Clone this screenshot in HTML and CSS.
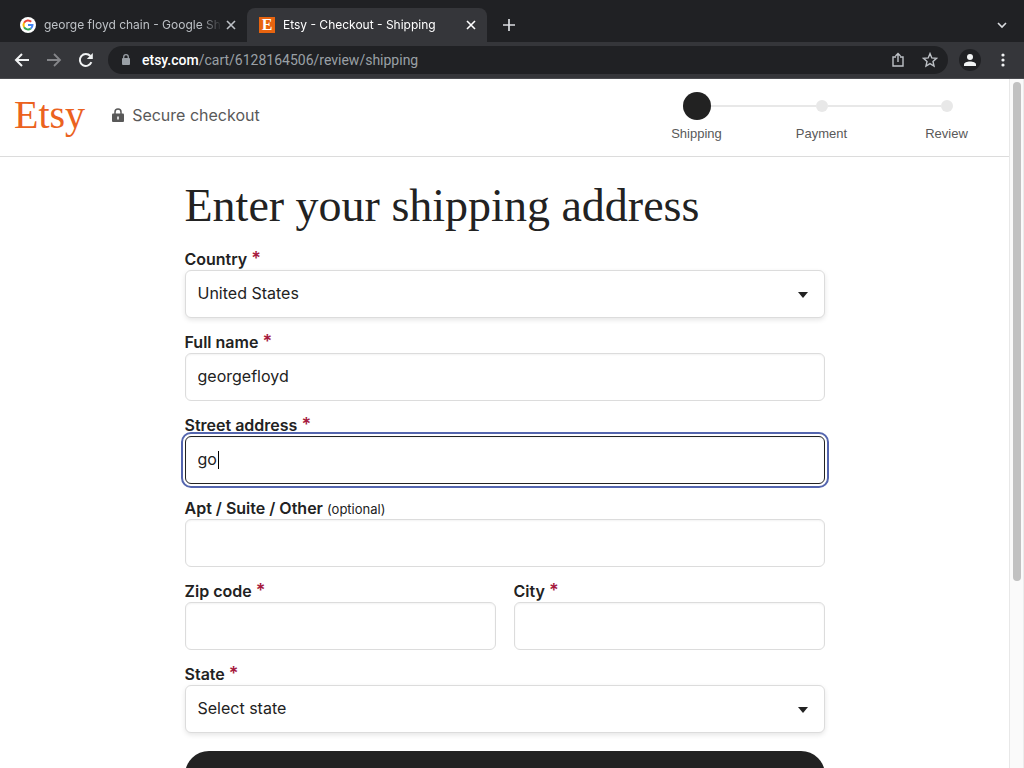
FILE: index.html
```
<!DOCTYPE html>
<html lang="en">
<head>
    <meta charset="UTF-8">
    <meta name="viewport" content="width=device-width, initial-scale=1.0">
    <title>Etsy - Checkout - Shipping</title>
    <link rel="stylesheet" href="styles.css">
</head>
<body>
    <!-- Tabs -->
    <div class="tab-bar">
        <div class="tab">
            <svg class="favicon" viewBox="0 0 16 16">
                <circle cx="8" cy="8" r="8" fill="#fff"/>
                <g fill="none" stroke-width="2">
                    <path d="M4.1 5.8A4.5 4.5 0 0 1 11.2 4.8" stroke="#ea4335"/>
                    <path d="M4.1 5.8A4.5 4.5 0 0 0 4.1 10.2" stroke="#fbbc05"/>
                    <path d="M4.1 10.2A4.5 4.5 0 0 0 10.8 11.5" stroke="#34a853"/>
                    <path d="M10.8 11.5A4.5 4.5 0 0 0 12.5 8H8" stroke="#4285f4"/>
                </g>
            </svg>
            <span class="tab-title">george floyd chain - Google Sh</span>
            <button class="tab-close" aria-label="Close tab">
                <svg width="10" height="10" viewBox="0 0 10 10"><path d="M1 1l8 8M9 1L1 9" stroke="currentColor" stroke-width="1.6"/></svg>
            </button>
        </div>
        <div class="tab active">
            <span class="favicon etsy-icon">E</span>
            <span class="tab-title">Etsy - Checkout - Shipping</span>
            <button class="tab-close" aria-label="Close tab">
                <svg width="10" height="10" viewBox="0 0 10 10"><path d="M1 1l8 8M9 1L1 9" stroke="currentColor" stroke-width="1.6"/></svg>
            </button>
        </div>
        <button class="new-tab" aria-label="New tab">
            <svg width="12" height="12" viewBox="0 0 12 12"><path d="M6 0v12M0 6h12" stroke="currentColor" stroke-width="1.7"/></svg>
        </button>
        <button class="tab-search" aria-label="Search tabs">
            <svg width="12" height="8" viewBox="0 0 12 8"><path d="M2 2l4 4 4-4" fill="none" stroke="currentColor" stroke-width="1.6"/></svg>
        </button>
    </div>

    <!-- Toolbar -->
    <div class="toolbar">
        <button aria-label="Back">
            <svg width="16" height="16" viewBox="0 0 16 16" fill="none" stroke="currentColor" stroke-width="2"><path d="M15 8H2M8 2L2 8l6 6"/></svg>
        </button>
        <button class="dim" aria-label="Forward">
            <svg width="16" height="16" viewBox="0 0 16 16" fill="none" stroke="currentColor" stroke-width="1.8"><path d="M1 8h13M8 2l6 6-6 6"/></svg>
        </button>
        <button aria-label="Reload">
            <svg width="16" height="16" viewBox="0 0 16 16" fill="none" stroke="currentColor" stroke-width="2"><path d="M13.4 10.2A6 6 0 1 1 12.4 4"/><path d="M14.8 1v6H8.8z" fill="currentColor" stroke="none"/></svg>
        </button>
        <div class="address-bar">
            <svg width="10" height="14" viewBox="0 0 10 14"><path d="M2.7 6V4a2.3 2.3 0 0 1 4.6 0v2" fill="none" stroke="currentColor" stroke-width="1.3"/><rect x="1" y="5" width="8" height="7" rx="1" fill="currentColor"/></svg>
            <span class="url"><b>etsy.com</b>/cart/6128164506/review/shipping</span>
            <button aria-label="Share">
                <svg width="12" height="16" viewBox="0 0 12 16" fill="none" stroke="currentColor" stroke-width="1.4"><path d="M4 5H1v9h10V5H8M6 10V2M3.5 4L6 1.5 8.5 4"/></svg>
            </button>
            <button aria-label="Bookmark">
                <svg width="16" height="16" viewBox="0 0 16 16" fill="none" stroke="currentColor" stroke-width="1.4"><path d="M8 1.6l1.8 4.3 4.7.4-3.5 3.1 1 4.6-4-2.4-4 2.4 1-4.6-3.5-3.1 4.7-.4z"/></svg>
            </button>
        </div>
        <button class="profile" aria-label="Profile">
            <svg width="12" height="12" viewBox="0 0 12 12" fill="currentColor"><circle cx="6" cy="3" r="3"/><path d="M0 12v-1.5C0 8.5 3 7.5 6 7.5s6 1 6 3V12z"/></svg>
        </button>
        <button class="more" aria-label="Menu">
            <svg width="4" height="14" viewBox="0 0 4 14" fill="currentColor"><circle cx="2" cy="2" r="1.6"/><circle cx="2" cy="7" r="1.6"/><circle cx="2" cy="12" r="1.6"/></svg>
        </button>
    </div>

    <div class="viewport">
        <div class="page">
            <header class="site-header">
                <a class="logo" href="#">Etsy</a>
                <div class="secure">
                    <svg width="12" height="14" viewBox="0 0 12 14"><path d="M3 7V4a3 3 0 0 1 6 0v3" fill="none" stroke="currentColor" stroke-width="1.5"/><rect y="5.5" width="12" height="8.5" rx="1" fill="currentColor"/><path d="M6 8.5v3" stroke="#fff" stroke-width="1.5"/></svg>
                    <span>Secure checkout</span>
                </div>
                <ol class="steps">
                    <li class="current"><div class="track"><i></i></div>Shipping</li>
                    <li><div class="track"><i></i></div>Payment</li>
                    <li><div class="track"><i></i></div>Review</li>
                </ol>
            </header>

            <!-- Shipping form -->
            <main>
                <form class="address-form">
                    <h1>Enter your shipping address</h1>
                    <div class="field">
                        <label for="country">Country <span class="required">*</span></label>
                        <div class="select-wrap">
                            <select id="country"><option>United States</option></select>
                        </div>
                    </div>
                    <div class="field">
                        <label for="fullName">Full name <span class="required">*</span></label>
                        <input type="text" id="fullName" value="georgefloyd">
                    </div>
                    <div class="field">
                        <label for="street">Street address <span class="required">*</span></label>
                        <div class="focused">
                            <input type="text" id="street" value="go">
                            <span class="caret"></span>
                        </div>
                    </div>
                    <div class="field">
                        <label for="apt">Apt / Suite / Other <small>(optional)</small></label>
                        <input type="text" id="apt">
                    </div>
                    <div class="field-row">
                        <div class="field">
                            <label for="zip">Zip code <span class="required">*</span></label>
                            <input type="text" id="zip">
                        </div>
                        <div class="field">
                            <label for="city">City <span class="required">*</span></label>
                            <input type="text" id="city">
                        </div>
                    </div>
                    <div class="field">
                        <label for="state">State <span class="required">*</span></label>
                        <div class="select-wrap">
                            <select id="state"><option>Select state</option></select>
                        </div>
                    </div>
                    <button class="submit" type="button" aria-label="Continue to payment"></button>
                </form>
            </main>
        </div>
        <div class="scrollbar"><div class="thumb"></div></div>
    </div>
</body>
</html>
```

FILE: styles.css
```
* {
    box-sizing: border-box;
}
body {
    margin: 0;
    height: 100vh;
    display: flex;
    flex-direction: column;
    overflow: hidden;
    font-family: Inter, sans-serif;
    font-size: 16px;
    color: #222;
    background-color: #fff;
}
button {
    padding: 0;
    border: none;
    background: none;
    color: inherit;
    display: flex;
    align-items: center;
    justify-content: center;
    cursor: pointer;
}

/* Browser tabs */
.tab-bar {
    display: flex;
    align-items: flex-end;
    height: 42px;
    padding: 0 12px 0 7px;
    background-color: #202124;
    color: #dadce0;
    flex-shrink: 0;
}
.tab {
    display: flex;
    align-items: center;
    width: 240px;
    height: 34px;
    padding: 0 10px 0 13px;
    border-radius: 8px 8px 0 0;
    font-size: 12px;
    color: #bdc1c6;
}
.tab.active {
    padding-left: 12px;
    background-color: #35363a;
    color: #fff;
}
.favicon {
    width: 16px;
    height: 16px;
    margin-right: 8px;
    flex-shrink: 0;
}
.etsy-icon {
    background-color: #e8640f;
    color: #fff;
    font: bold 16px/16px "Liberation Serif", serif;
    text-align: center;
}
.tab-title {
    flex: 1;
    overflow: hidden;
    line-height: 16px;
    white-space: nowrap;
    -webkit-mask-image: linear-gradient(to right, #000 156px, transparent 178px);
    mask-image: linear-gradient(to right, #000 156px, transparent 178px);
}
.tab-close {
    width: 12px;
    height: 16px;
    margin-left: 2px;
}
.new-tab, .tab-search {
    width: 20px;
    height: 34px;
    margin-left: 12px;
}
.tab-search {
    margin-left: auto;
}

/* Toolbar */
.toolbar {
    display: flex;
    align-items: center;
    height: 37px;
    padding: 0 14px;
    background-color: #35363a;
    border-bottom: 1px solid #4a4b4f;
    color: #f1f3f4;
    flex-shrink: 0;
}
.toolbar > button {
    width: 16px;
    height: 28px;
    margin-right: 16px;
}
.toolbar .dim {
    color: #85868a;
}
.address-bar {
    flex: 1;
    display: flex;
    align-items: center;
    gap: 18px;
    height: 28px;
    margin-left: -2px;
    padding: 0 10px 0 13px;
    border-radius: 14px;
    background-color: #202124;
    color: #9aa0a6;
}
.address-bar button {
    color: #bdc1c6;
}
.url {
    flex: 1;
    margin-left: -7px;
    font: 14px/20px Roboto, sans-serif;
}
.url b {
    font-weight: 500;
    color: #fff;
}
.toolbar .profile {
    width: 22px;
    height: 22px;
    margin: 0 16px 0 11px;
    border-radius: 50%;
    background-color: #202124;
}
.toolbar .more {
    width: 12px;
    margin-right: 1px;
}

/* Page */
.viewport {
    flex: 1;
    display: flex;
    min-height: 0;
}
.page {
    flex: 1;
    overflow: hidden;
}
.scrollbar {
    width: 15px;
    padding: 3px;
    border-left: 1px solid #e8e8e8;
    border-right: 1px solid #ececec;
    background-color: #fafafa;
}
.thumb {
    width: 8px;
    height: 73%;
    border-radius: 4px;
    background-color: #c1c1c1;
}
.site-header {
    display: flex;
    align-items: center;
    height: 78px;
    padding: 0 0 6px 14px;
    border-bottom: 1px solid #dcdcdc;
    color: #595959;
}
.logo {
    font: 40px/44px "Liberation Serif", serif;
    color: #eb6220;
    text-decoration: none;
}
.secure {
    display: flex;
    align-items: center;
    gap: 8px;
    margin-left: 27px;
}
.steps {
    display: grid;
    grid-template-columns: repeat(3, 125px);
    margin: 11px 0 0 auto;
    padding: 0;
    list-style: none;
    font: 13px/28px "Liberation Sans", sans-serif;
    text-align: center;
}
.track {
    display: flex;
    align-items: center;
    height: 28px;
}
.track::before, .track::after {
    content: "";
    flex: 1;
    height: 2px;
    background-color: #e8e8e8;
}
.steps li:first-child .track::before, .steps li:last-child .track::after {
    background: none;
}
.track i {
    width: 12px;
    height: 12px;
    border-radius: 50%;
    background-color: #e8e8e8;
}
.current .track i {
    width: 28px;
    height: 28px;
    background-color: #222;
}

/* Address form */
.address-form {
    max-width: 640px;
    margin: 0 auto;
}
h1 {
    margin: 0;
    padding: 21px 0 15px;
    font: 46px/56px "Liberation Serif", serif;
    white-space: nowrap;
}
.field {
    flex: 1;
    margin-bottom: 14px;
}
.field-row {
    display: flex;
    gap: 18px;
}
label {
    display: block;
    height: 21px;
    font-weight: 600;
    font-size: 16px;
    line-height: 20px;
}
label small {
    font-size: 13px;
    font-weight: 400;
}
.required {
    color: #a61a3e;
    font-size: 18px;
}
input, select {
    display: block;
    width: 100%;
    height: 48px;
    padding: 0 12px 2px;
    border: 1px solid #dcdcdc;
    border-radius: 6px;
    background-color: #fff;
    color: #222;
    font: 16px Inter, sans-serif;
    appearance: none;
}
input {
    box-shadow: inset 0 1px 2px rgba(0, 0, 0, 0.05);
}
select {
    box-shadow: 0 2px 5px rgba(0, 0, 0, 0.1);
}
.select-wrap, .focused {
    position: relative;
}
.select-wrap::after {
    content: "";
    position: absolute;
    right: 17px;
    top: 22px;
    border: 5px solid transparent;
    border-top: 6px solid #222;
    border-bottom: none;
    pointer-events: none;
}
.focused input {
    border-color: #222;
    outline: 2px solid #5465ae;
    outline-offset: 2px;
}
.caret {
    position: absolute;
    left: 33px;
    top: 15px;
    width: 1px;
    height: 18px;
    background-color: #000;
}
.submit {
    width: 100%;
    height: 48px;
    margin-top: 18px;
    border-radius: 24px;
    background-color: #222;
}
```
